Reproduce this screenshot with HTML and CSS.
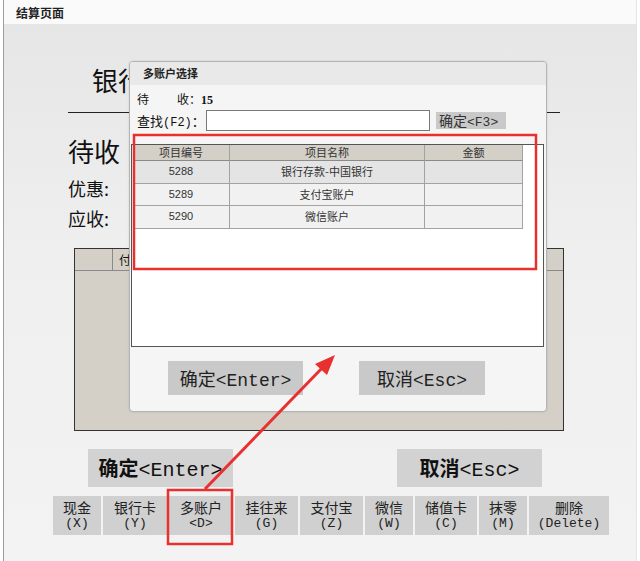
FILE: index.html
```html
<!DOCTYPE html>
<html lang="zh-CN">
<head>
    <meta charset="UTF-8">
    <meta name="viewport" content="width=device-width, initial-scale=1.0">
    <title>结算页面</title>
    <link rel="stylesheet" href="styles.css">
</head>
<body>
    <div class="window">
        <div class="titlebar">结算页面</div>
        <div class="main">
            <div class="heading">银行卡</div>
            <div class="rule"></div>
            <div class="due">待收</div>
            <div class="field first">优惠:</div>
            <div class="field">应收:</div>
            <div class="paytable">
                <div class="paytable-head">
                    <span class="c1"></span>
                    <span class="c2">付款方式</span>
                </div>
            </div>
            <div class="actions">
                <div class="big"><b>确定</b><span class="lat">&lt;Enter&gt;</span></div>
                <div class="big"><b>取消</b><span class="lat">&lt;Esc&gt;</span></div>
            </div>
            <div class="methods">
                <div class="method w48"><span>现金</span><span class="lat">(X)</span></div>
                <div class="method w64"><span>银行卡</span><span class="lat">(Y)</span></div>
                <div class="method w64"><span>多账户</span><span class="lat">&lt;D&gt;</span></div>
                <div class="method w63"><span>挂往来</span><span class="lat">(G)</span></div>
                <div class="method w63"><span>支付宝</span><span class="lat">(Z)</span></div>
                <div class="method w48"><span>微信</span><span class="lat">(W)</span></div>
                <div class="method w62"><span>储值卡</span><span class="lat">(C)</span></div>
                <div class="method w48"><span>抹零</span><span class="lat">(M)</span></div>
                <div class="method w80"><span>删除</span><span class="lat">(Delete)</span></div>
            </div>
        </div>
    </div>

    <!-- 多账户选择 弹窗 -->
    <div class="dialog">
        <div class="dialog-title">多账户选择</div>
        <div class="dialog-body">
            <div class="pending"><span class="gap">待</span>收：<b class="num">15</b></div>
            <div class="search">
                <span class="search-label">查找<span class="lat">(F2)</span>：</span>
                <div class="search-input"></div>
                <div class="small-btn">确定<span class="lat">&lt;F3&gt;</span></div>
            </div>
            <div class="gridbox">
                <div class="grid">
                    <div class="cell head">项目编号</div>
                    <div class="cell head">项目名称</div>
                    <div class="cell head">金额</div>
                    <div class="cell sel num-cell">5288</div>
                    <div class="cell sel">银行存款-中国银行</div>
                    <div class="cell sel"></div>
                    <div class="cell num-cell">5289</div>
                    <div class="cell">支付宝账户</div>
                    <div class="cell"></div>
                    <div class="cell num-cell">5290</div>
                    <div class="cell">微信账户</div>
                    <div class="cell"></div>
                </div>
            </div>
            <div class="dialog-actions">
                <div class="mid ok">确定<span class="lat">&lt;Enter&gt;</span></div>
                <div class="mid cancel">取消<span class="lat">&lt;Esc&gt;</span></div>
            </div>
        </div>
    </div>

    <!-- 标注 -->
    <svg class="marks" width="640" height="561" viewBox="0 0 640 561">
        <rect x="134" y="135" width="402" height="134" fill="none" stroke="#e8312f" stroke-width="2.5"/>
        <rect x="168" y="490" width="64" height="54" fill="none" stroke="#e8312f" stroke-width="2.5"/>
        <line x1="205" y1="489" x2="325" y2="365" stroke="#e8312f" stroke-width="3"/>
        <polygon points="335,355 327,375 315,364" fill="#e8312f"/>
    </svg>
</body>
</html>
```

FILE: styles.css
```css
* {
    box-sizing: border-box;
}
body {
    margin: 0;
    width: 640px;
    height: 561px;
    position: relative;
    overflow: hidden;
    background: #ffffff;
    color: #111;
    font-family: "Noto Sans CJK SC", sans-serif;
}
.lat {
    font-family: "Liberation Mono", "Noto Sans CJK SC", monospace;
}
.window {
    margin-left: 3px;
    width: 634px;
    height: 561px;
    border-left: 1px solid #9c9c9c;
    border-right: 1px solid #e4e4e4;
    background: linear-gradient(#e5e5e5, #efefef 45%, #f3f3f3);
}
.titlebar {
    height: 24px;
    background: #fafafa;
    font-size: 12px;
    font-weight: bold;
    line-height: 26px;
    padding-left: 12px;
    color: #222;
}
.main {
    padding-left: 64px;
}
.heading {
    margin: 41px 0 0 24px;
    font-size: 26px;
    line-height: 30px;
}
.rule {
    margin-top: 17px;
    width: 492px;
    height: 1px;
    background: #222;
}
.due {
    margin-top: 23px;
    font-size: 26px;
    line-height: 30px;
}
.field {
    font-size: 18px;
    line-height: 24px;
}
.field.first {
    margin-top: 10px;
}
.field + .field {
    margin-top: 6px;
}
.paytable {
    margin: 18px 0 0 6px;
    width: 490px;
    height: 183px;
    border: 1px solid #333;
    background: #d4d0c8;
}
.paytable-head {
    display: flex;
    height: 22px;
    border-bottom: 1px solid #8a8a8a;
}
.paytable-head span {
    border-right: 1px solid #8a8a8a;
    font-size: 12px;
    line-height: 21px;
}
.paytable-head .c1 {
    width: 38px;
}
.paytable-head .c2 {
    padding-left: 6px;
    width: 120px;
}
.actions {
    margin: 18px 0 0 20px;
    display: flex;
    gap: 164px;
}
.big {
    width: 145px;
    height: 38px;
    background: #d2d2d2;
    font-size: 20px;
    line-height: 38px;
    text-align: center;
    color: #111;
}
.big b {
    font-weight: 700;
}
.methods {
    margin: 9px 0 0 -15px;
    display: flex;
    gap: 2px;
}
.method {
    height: 39px;
    background: #d0d0d0;
    font-size: 14px;
    line-height: 17px;
    display: flex;
    flex-direction: column;
    align-items: center;
    justify-content: center;
    color: #222;
}
.method .lat {
    font-size: 13px;
    line-height: 16px;
}
.w48 { width: 48px; }
.w62 { width: 62px; }
.w63 { width: 63px; }
.w64 { width: 64px; }
.w80 { width: 80px; }

/* 弹窗 */
.dialog {
    position: absolute;
    left: 129px;
    top: 61px;
    width: 418px;
    height: 351px;
    border: 1px solid #b4b4b4;
    border-radius: 4px;
    background: #f5f5f5;
    box-shadow: 0 0 2px rgba(0, 0, 0, 0.15);
}
.dialog-title {
    height: 23px;
    background: #e9e9e9;
    border-radius: 3px 3px 0 0;
    font-size: 11px;
    font-weight: bold;
    line-height: 22px;
    padding-left: 13px;
    color: #222;
}
.dialog-body {
    padding-left: 7px;
}
.pending {
    margin-top: 7px;
    font-size: 12px;
    line-height: 14px;
}
.pending .gap {
    margin-right: 28px;
}
.pending .num {
    font-family: "Liberation Serif", serif;
    font-size: 12px;
}
.search {
    margin-top: 2px;
    display: flex;
    align-items: center;
    height: 22px;
}
.search-label {
    width: 69px;
    font-size: 13px;
    white-space: nowrap;
}
.search-label .lat {
    font-size: 12px;
}
.search-input {
    width: 224px;
    height: 21px;
    background: #fff;
    border: 1px solid #7a7a7a;
}
.small-btn {
    margin-left: 6px;
    width: 70px;
    height: 17px;
    background: #c9c9c9;
    font-size: 14px;
    line-height: 17px;
    padding-left: 3px;
    color: #333;
}
.small-btn .lat {
    font-size: 13px;
}
.gridbox {
    margin: 13px 0 0 -6px;
    width: 413px;
    height: 203px;
    border: 1px solid #555;
    background: #fff;
}
.grid {
    margin-left: 1px;
    display: grid;
    grid-template-columns: 97px 195px 98px;
    grid-template-rows: 16px 23px 22px 23px;
}
.cell {
    border-right: 1px solid #a2a2a2;
    border-bottom: 1px solid #a2a2a2;
    font-size: 11px;
    text-align: center;
    line-height: 21px;
    background: #f1f1f1;
    color: #333;
}
.cell.head {
    background: #d4d0c8;
    font-size: 11px;
    line-height: 15px;
    border-bottom-color: #8a8a8a;
}
.cell.sel {
    background: #e4e4e4;
}
.num-cell {
    font-family: "Liberation Sans", sans-serif;
}
.dialog-actions {
    margin: 14px 0 0 31px;
    display: flex;
    gap: 56px;
}
.mid {
    height: 34px;
    background: #c9c9c9;
    font-size: 18px;
    line-height: 34px;
    text-align: center;
    color: #222;
}
.mid.ok {
    width: 135px;
}
.mid.cancel {
    width: 126px;
}
.marks {
    position: absolute;
    left: 0;
    top: 0;
}
```
